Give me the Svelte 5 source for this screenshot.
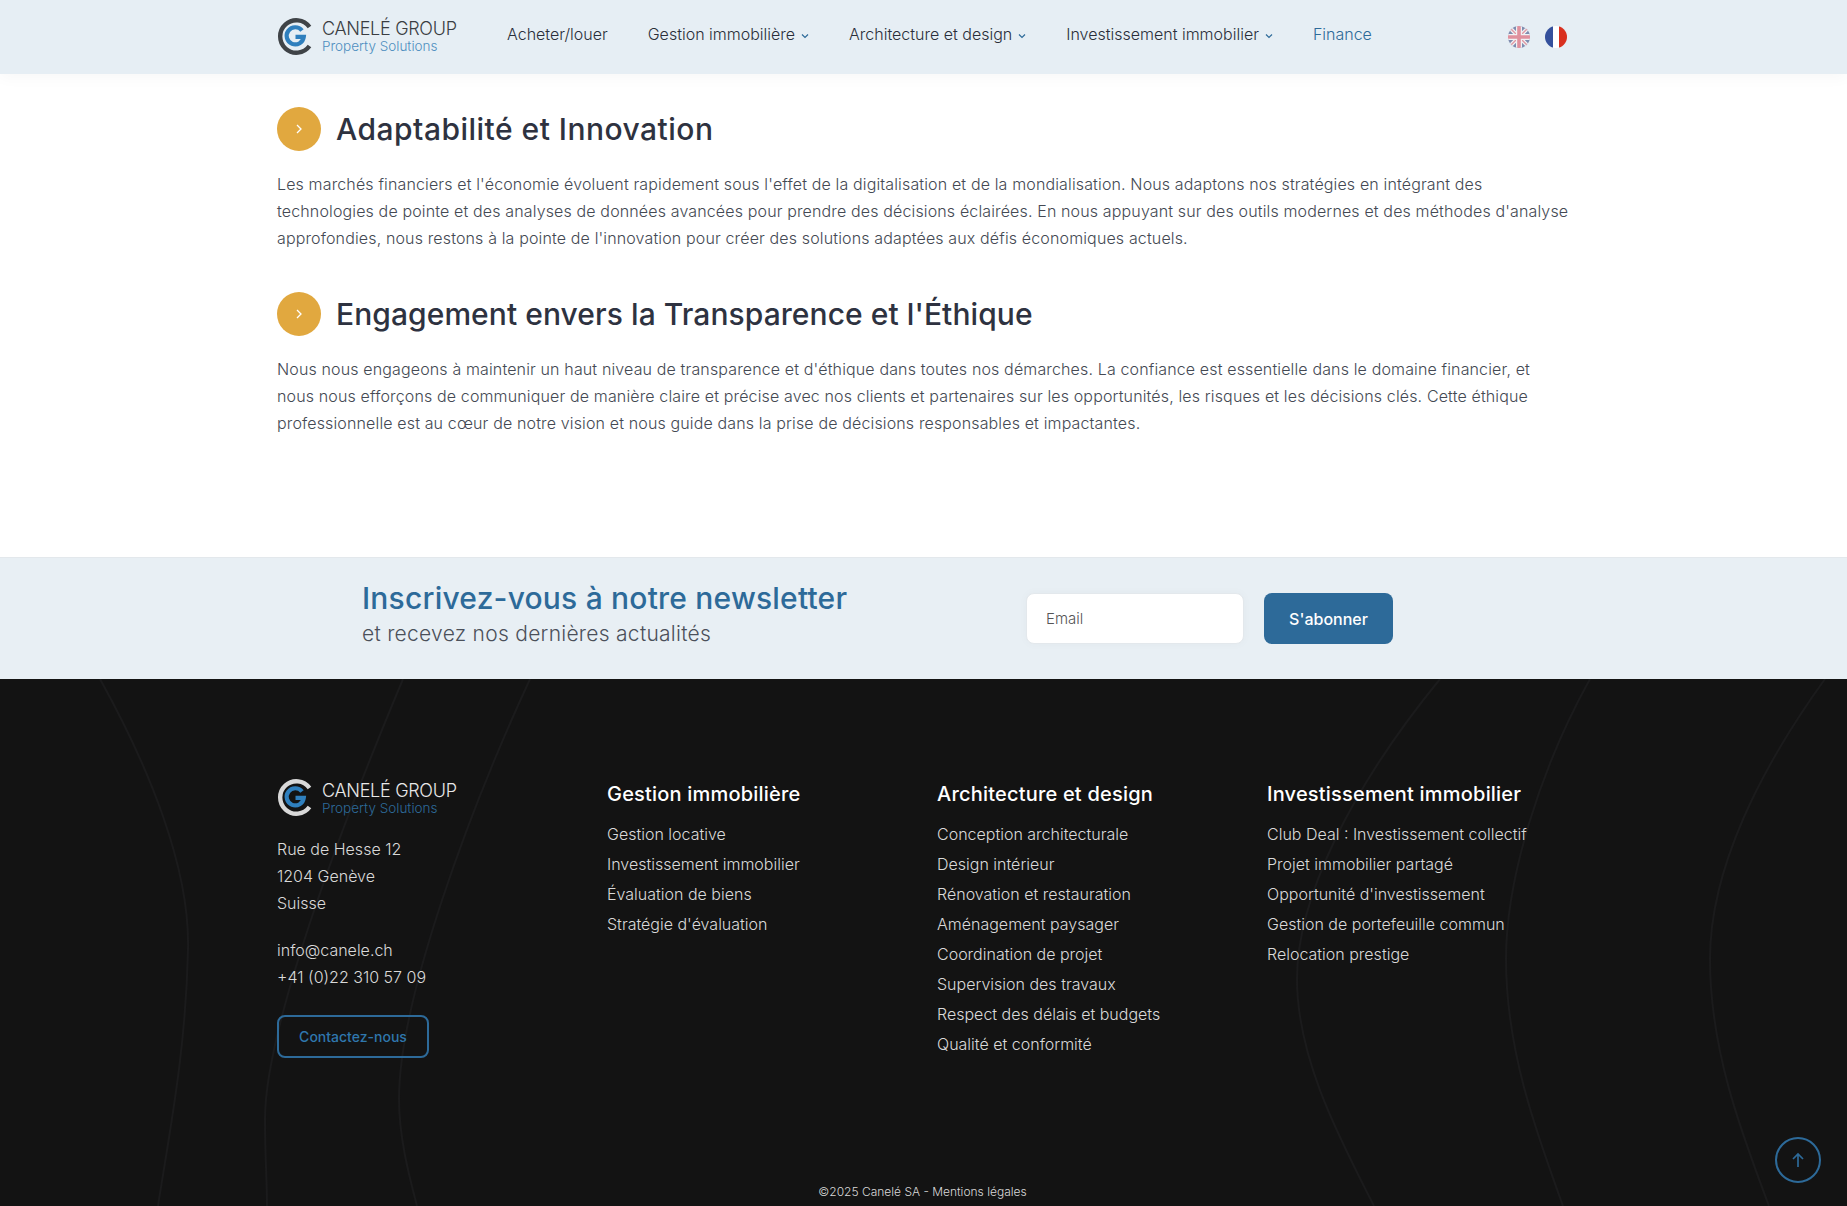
<script>
  const nav = [
    { t: 'Acheter/louer' },
    { t: 'Gestion immobilière', c: true },
    { t: 'Architecture et design', c: true },
    { t: 'Investissement immobilier', c: true },
    { t: 'Finance', active: true }
  ];
  const cols = [
    { h: 'Gestion immobilière', items: ['Gestion locative', 'Investissement immobilier', 'Évaluation de biens', "Stratégie d'évaluation"] },
    { h: 'Architecture et design', items: ['Conception architecturale', 'Design intérieur', 'Rénovation et restauration', 'Aménagement paysager', 'Coordination de projet', 'Supervision des travaux', 'Respect des délais et budgets', 'Qualité et conformité'] },
    { h: 'Investissement immobilier', items: ['Club Deal : Investissement collectif', 'Projet immobilier partagé', "Opportunité d'investissement", 'Gestion de portefeuille commun', 'Relocation prestige'] }
  ];
  const sections = [
    { k: 'first', h: 'Adaptabilité et Innovation', p: ["Les marchés financiers et l'économie évoluent rapidement sous l'effet de la digitalisation et de la mondialisation. Nous adaptons nos stratégies en intégrant des", "technologies de pointe et des analyses de données avancées pour prendre des décisions éclairées. En nous appuyant sur des outils modernes et des méthodes d'analyse", "approfondies, nous restons à la pointe de l'innovation pour créer des solutions adaptées aux défis économiques actuels."] },
    { k: 'second', h: "Engagement envers la Transparence et l'Éthique", p: ["Nous nous engageons à maintenir un haut niveau de transparence et d'éthique dans toutes nos démarches. La confiance est essentielle dans le domaine financier, et", "nous nous efforçons de communiquer de manière claire et précise avec nos clients et partenaires sur les opportunités, les risques et les décisions clés. Cette éthique", "professionnelle est au cœur de notre vision et nous guide dans la prise de décisions responsables et impactantes."] }
  ];
  const curves = [
    'M100 0 C150 90 190 190 188 270 C186 370 170 450 158 527',
    'M403 0 C340 150 265 350 265 440 C265 480 267 500 267 527',
    'M530 0 C470 130 399 320 399 420 C399 460 410 500 417 527',
    'M1440 0 C1350 110 1297 220 1297 300 C1297 380 1340 460 1374 527',
    'M1590 0 C1540 90 1506 200 1506 280 C1506 370 1535 450 1563 527',
    'M1825 0 C1760 90 1710 190 1710 280 C1710 370 1740 450 1769 527'
  ];
</script>

{#snippet logo(ring, sub)}
  <div class="logo">
    <svg width="37" height="37" viewBox="0 0 37 37" fill="none">
      <path d="M32.5 9A16.2 16.2 0 1 0 32.5 28" stroke={ring} stroke-width="4.4"/>
      <path d="M25 12.5A8.6 8.6 0 1 0 26.8 18.8H18.5" stroke="#2f7fbd" stroke-width="4.2"/>
    </svg>
    <div class="logo-text">
      <span class="l1">CANELÉ GROUP</span>
      <span class="l2" style:color={sub}>Property Solutions</span>
    </div>
  </div>
{/snippet}

<header>
  <div class="wrap head">
    {@render logo('#3f4347', '#4f8fc0')}
    <nav>
      {#each nav as n}
        <a href="#top" class:active={n.active}>{n.t}{#if n.c}<svg class="chev" width="8" height="6" viewBox="0 0 8 6" fill="none"><path d="M1 1.5L4 4.5L7 1.5" stroke="#2d6a99" stroke-width="1.2"/></svg>{/if}</a>
      {/each}
    </nav>
    <div class="flags">
      <svg class="uk" width="22" height="22" viewBox="0 0 22 22">
        <defs><clipPath id="cu"><circle cx="11" cy="11" r="11"/></clipPath></defs>
        <g clip-path="url(#cu)">
          <rect width="22" height="22" fill="#6d7ba3"/>
          <path d="M0 0L22 22M22 0L0 22" stroke="#f3f3f5" stroke-width="4"/>
          <path d="M0 0L22 22M22 0L0 22" stroke="#df8a96" stroke-width="1.4"/>
          <path d="M11 0V22M0 11H22" stroke="#f3f3f5" stroke-width="6"/>
          <path d="M11 0V22M0 11H22" stroke="#e0808e" stroke-width="3.6"/>
        </g>
      </svg>
      <svg width="22" height="24" viewBox="0 0 22 24">
        <defs><clipPath id="cf"><circle cx="11" cy="12" r="11"/></clipPath></defs>
        <g clip-path="url(#cf)">
          <rect width="8" height="24" fill="#34509c"/>
          <rect x="8" width="6" height="24" fill="#fff"/>
          <rect x="14" width="8" height="24" fill="#d9301f"/>
        </g>
      </svg>
    </div>
  </div>
</header>

<main class="wrap">
  {#each sections as s}
    <section>
      <div class="title">
        <span class="dot"><svg width="10" height="12" viewBox="0 0 10 12" fill="none"><path d="M3 2L7 6L3 10" stroke="#fff" stroke-width="1.3"/></svg></span>
        <h2 class={s.k}>{s.h}</h2>
      </div>
      <p>{#each s.p as l}<span>{l}</span>{/each}</p>
    </section>
  {/each}
</main>

<div class="news">
  <div class="wrap news-in">
    <div class="news-copy">
      <h3>Inscrivez-vous à notre newsletter</h3>
      <div class="sub">et recevez nos dernières actualités</div>
    </div>
    <form>
      <input placeholder="Email" />
      <button type="button">S'abonner</button>
    </form>
  </div>
</div>

<footer>
  <svg class="curves" width="1847" height="527" viewBox="0 0 1847 527" fill="none">
    {#each curves as d}<path {d} stroke="#1b1b1c" stroke-width="2"/>{/each}
  </svg>
  <div class="wrap grid">
    <div>
      {@render logo('#d8d8d8', '#2d6a99')}
      <address>Rue de Hesse 12<br/>1204 Genève<br/>Suisse</address>
      <div class="contact">info@canele.ch<br/>+41 (0)22 310 57 09</div>
      <a class="btn" href="#top">Contactez-nous</a>
    </div>
    {#each cols as c}
      <div>
        <h4>{c.h}</h4>
        <ul>{#each c.items as i}<li>{i}</li>{/each}</ul>
      </div>
    {/each}
  </div>
  <div class="copy">©2025 Canelé SA - Mentions légales</div>
  <a class="top" href="#top" aria-label="Haut de page">
    <svg width="16" height="18" viewBox="0 0 16 18" fill="none"><path d="M8 16V3M3 8L8 3L13 8" stroke="#2d6a99" stroke-width="1.7"/></svg>
  </a>
</footer>

<style>
  :global(body) { margin: 0; background: #fff; font-family: Inter, "Noto Sans", sans-serif; }
  .wrap { width: 1293px; margin: 0 auto; box-sizing: border-box; }
  header { height: 74px; background: #e6eef4; box-shadow: 0 4px 14px rgba(0,0,0,.03); position: relative; }
  .head { display: flex; align-items: center; height: 74px; }
  .logo { display: flex; align-items: center; gap: 8px; width: 230px; flex: none; }
  .logo-text { display: flex; flex-direction: column; line-height: 1; }
  .l1 { font-size: 18px; font-weight: 300; letter-spacing: -.3px; }
  .l2 { font-size: 13.5px; font-weight: 300; margin-top: 2px; }
  header .l1 { color: #3a3d42; }
  header .logo { margin-top: -2px; }
  header .logo-text { margin-top: 2px; }
  .grid .logo-text { margin-top: 2px; }
  nav { display: flex; gap: 40px; margin-top: -6px; }
  nav a { font-size: 16px; font-weight: 300; color: #2a2e3a; text-decoration: none; }
  nav a.active { color: #2d6a99; }
  .chev { margin-left: 6px; vertical-align: 1px; }
  .flags { margin-left: auto; margin-right: 3px; display: flex; gap: 15px; align-items: center; }
  .uk { opacity: .85; }
  main { height: 483px; padding-top: 33px; }
  section { margin-bottom: 40px; }
  .title { display: flex; align-items: center; gap: 15px; height: 44px; }
  .dot { width: 44px; height: 44px; border-radius: 50%; background: #e1a83f; display: flex; align-items: center; justify-content: center; }
  h2 { margin: 0; font-size: 30px; font-weight: 500; color: #2e3240; }
  h2.first { letter-spacing: .48px; }
  h2.second { letter-spacing: .07px; }
  p { margin: 20px 0 0; font-size: 16px; font-weight: 300; line-height: 27px; color: #444953; letter-spacing: .14px; }
  p span { display: block; white-space: nowrap; }
  .news { height: 122px; background: #e8eff4; border-top: 1px solid #e3e8ec; box-sizing: border-box; }
  .news-in { display: flex; align-items: center; height: 100%; padding-left: 85px; }
  .news-copy { width: 664px; margin-top: -11px; }
  h3 { margin: 0; font-size: 30px; line-height: 42px; font-weight: 500; color: #2d6a99; letter-spacing: .2px; }
  .sub { font-size: 21px; line-height: 30px; font-weight: 300; color: #4b505a; letter-spacing: .27px; }
  form { display: flex; gap: 20px; }
  input { width: 218px; height: 51px; box-sizing: border-box; border: 1px solid #e3e8ec; border-radius: 8px; background: #fff; padding: 0 19px; font: 300 15px Inter, sans-serif; box-shadow: 0 0 10px rgba(0,0,0,.03); }
  input::placeholder { color: #555; opacity: 1; }
  button { width: 129px; height: 51px; border: 0; border-radius: 8px; background: #2d6a99; color: #fff; font: 500 16px Inter, sans-serif; }
  footer { height: 527px; background: #131313; position: relative; overflow: hidden; color: #d9d9d9; }
  .curves { position: absolute; inset: 0; pointer-events: none; }
  .grid { position: relative; display: grid; grid-template-columns: repeat(3, 330px) auto; padding-top: 101px; font-weight: 300; }
  .grid .logo { margin-top: -1px; }
  footer .l1 { color: #e8e8e8; }
  address { font-style: normal; font-size: 16px; line-height: 27px; margin-top: 20px; }
  .contact { font-size: 16px; line-height: 27px; margin-top: 20px; }
  .btn { display: inline-block; margin-top: 24px; width: 152px; height: 43px; line-height: 39px; box-sizing: border-box; text-align: center; border: 2px solid #2d6a99; border-radius: 8px; color: #2f77ad; font-size: 14px; font-weight: 500; text-decoration: none; }
  h4 { margin: 0; font-size: 20px; line-height: 28px; font-weight: 500; color: #fff; letter-spacing: .2px; }
  ul { list-style: none; margin: 11px 0 0; padding: 0; }
  li { font-size: 16px; line-height: 30px; white-space: nowrap; }
  .copy { position: absolute; left: 0; right: 0; bottom: 6px; padding-right: 2px; text-align: center; font-size: 12px; font-weight: 300; line-height: 16px; }
  .top { position: absolute; left: 1775px; top: 458px; width: 46px; height: 46px; box-sizing: border-box; border: 2px solid #2d6a99; border-radius: 50%; display: flex; align-items: center; justify-content: center; }
</style>
